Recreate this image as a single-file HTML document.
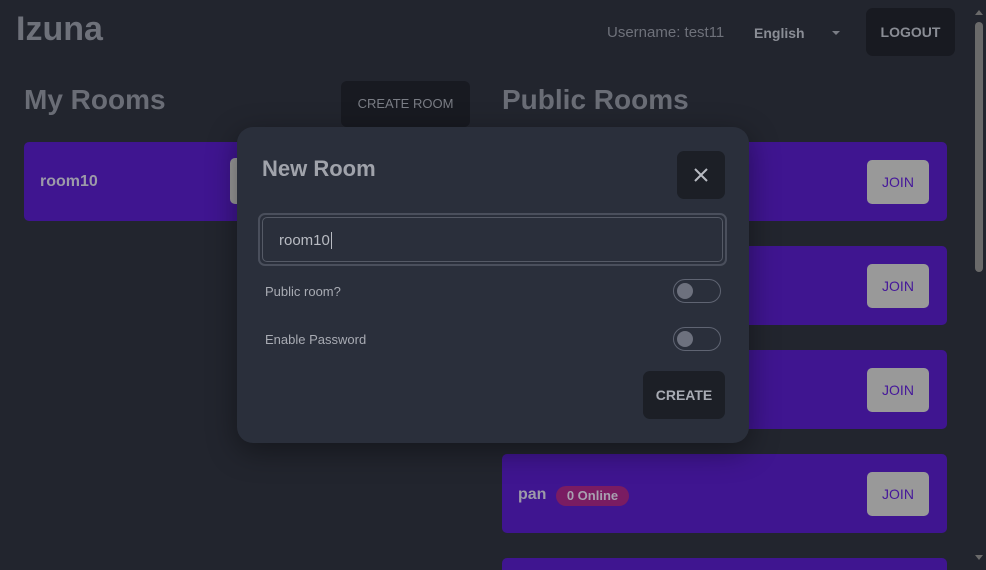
<!DOCTYPE html>
<html style="overflow:hidden;height:570px"><head><style>
*{box-sizing:border-box;margin:0;padding:0}
body{width:986px;height:570px;overflow:hidden;background:#22252e;font-family:"Liberation Sans",sans-serif;position:relative}
.a{position:absolute}
.card{position:absolute;left:502px;width:445px;height:79px;background:#3f1590;border-radius:5px}
.join{position:absolute;right:18px;top:18px;width:62px;height:44px;background:#999;border-radius:5px;color:#45179a;font-size:14px;text-align:center;line-height:44px}
.tog{position:absolute;left:673px;width:48px;height:24px;border:1.5px solid #5f6472;border-radius:12px}
.tog::after{content:"";position:absolute;left:3px;top:3px;width:16px;height:16px;border-radius:50%;background:#6d717e}
.lbl{position:absolute;left:265px;color:#a8abb3;font-size:13px}
</style></head><body>
<div class="a" style="left:16px;top:10px;font-size:34px;font-weight:bold;color:#6e717a">Izuna</div>
<div class="a" style="left:607px;top:24px;font-size:15px;color:#6e717a">Username: test11</div>
<div class="a" style="left:754px;top:25px;font-size:14px;font-weight:bold;color:#8a8d95">English</div>
<div class="a" style="left:832px;top:31px;width:0;height:0;border-left:4px solid transparent;border-right:4px solid transparent;border-top:4px solid #7a7d85"></div>
<div class="a" style="left:866px;top:8px;width:89px;height:48px;background:#181a21;border-radius:7px;color:#8a8d95;font-size:14px;font-weight:bold;text-align:center;line-height:48px">LOGOUT</div>
<div class="a" style="left:24px;top:84px;font-size:28px;font-weight:bold;color:#6a6d76">My Rooms</div>
<div class="a" style="left:341px;top:81px;width:129px;height:46px;background:#181a21;border-radius:6px;color:#7a7d85;font-size:13px;text-align:center;line-height:46px">CREATE ROOM</div>
<div class="a" style="left:502px;top:84px;font-size:28px;font-weight:bold;color:#6a6d76">Public Rooms</div>
<div class="a" style="left:24px;top:142px;width:446px;height:79px;background:#3f1590;border-radius:5px"><div class="a" style="left:16px;top:31px;color:#9c9aa8;font-size:16px;font-weight:bold">room10</div><div class="a" style="left:206px;top:16px;width:40px;height:46px;background:#999;border-radius:5px"></div></div>
<div class="card" style="top:142px"><div class="join">JOIN</div></div>
<div class="card" style="top:246px"><div class="join">JOIN</div></div>
<div class="card" style="top:350px"><div class="join">JOIN</div></div>
<div class="card" style="top:454px"><div class="a" style="left:16px;top:32px;color:#9c9aa8;font-size:16px;font-weight:bold">pan</div><div class="a" style="left:54px;top:32px;width:73px;height:20px;border-radius:10px;background:#7a1c62;color:#a8a0b0;font-size:13px;font-weight:bold;text-align:center;line-height:20px">0 Online</div><div class="join">JOIN</div></div>
<div class="card" style="top:558px;height:12px;border-radius:5px 5px 0 0"></div>
<div class="a" style="left:237px;top:127px;width:512px;height:316px;background:#2a2f3b;border-radius:16px;box-shadow:0 8px 30px rgba(0,0,0,.4)"></div>
<div class="a" style="left:262px;top:156px;font-size:22px;font-weight:bold;color:#a0a3ab">New Room</div>
<div class="a" style="left:677px;top:151px;width:48px;height:48px;background:#1c1f26;border-radius:7px"><svg width="48" height="48"><path d="M18 18L30 30M30 18L18 30" stroke="#b8bbc2" stroke-width="2"/></svg></div>
<div class="a" style="left:258px;top:213px;width:469px;height:53px;border:2px solid #4a4f5c;border-radius:7px;padding:2px"><div style="width:100%;height:100%;border:1px solid #555a66;border-radius:5px;color:#b8bbc2;font-size:15px;line-height:45px;padding-left:16px">room10<span style="border-left:1px solid #b8bbc2;margin-left:1px"></span></div></div>
<div class="lbl" style="top:284px">Public room?</div>
<div class="tog" style="top:279px"></div>
<div class="lbl" style="top:332px">Enable Password</div>
<div class="tog" style="top:327px"></div>
<div class="a" style="left:643px;top:371px;width:82px;height:48px;background:#1c1f26;border-radius:7px;color:#a8abb3;font-size:14px;font-weight:bold;text-align:center;line-height:48px">CREATE</div>
<div class="a" style="left:972px;top:0;width:14px;height:570px;background:#22252e"></div>
<div class="a" style="left:975px;top:22px;width:8px;height:250px;background:#6a6a6a;border-radius:4px"></div>
<div class="a" style="left:975px;top:10px;border-left:4px solid transparent;border-right:4px solid transparent;border-bottom:5px solid #6a6a6a"></div>
<div class="a" style="left:975px;top:555px;border-left:4px solid transparent;border-right:4px solid transparent;border-top:5px solid #6a6a6a"></div>
</body></html>
